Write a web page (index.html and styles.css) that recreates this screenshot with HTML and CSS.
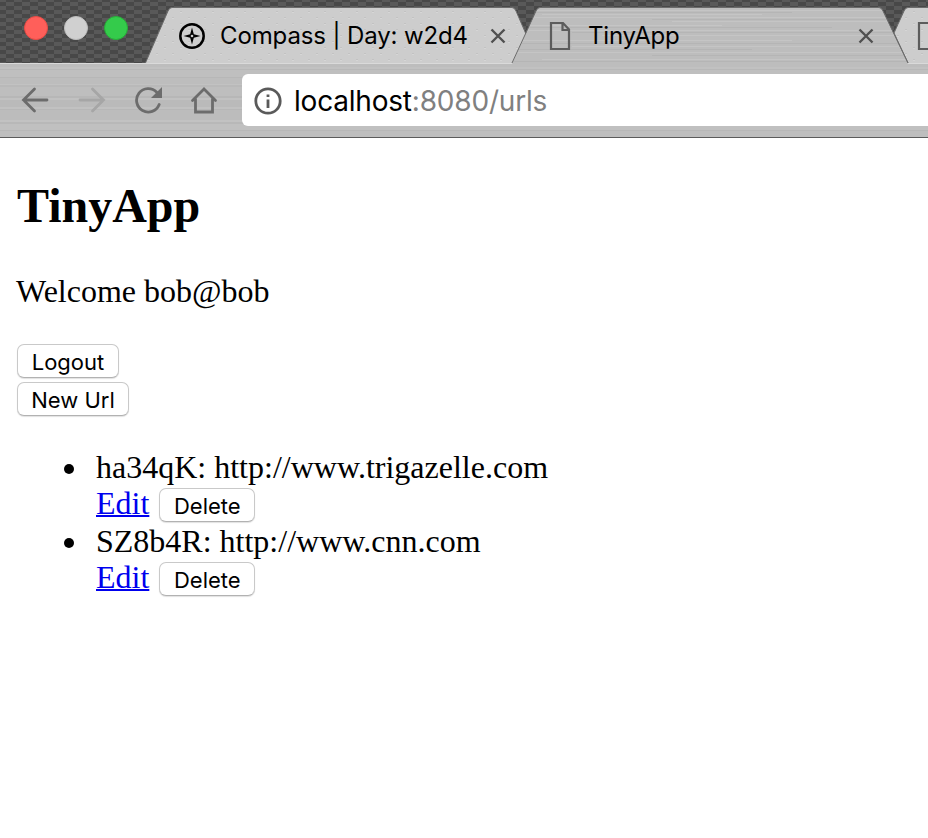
FILE: index.html
```html
<!DOCTYPE html>
<html lang="en">
<head>
<meta charset="utf-8">
<title>TinyApp</title>
<link rel="stylesheet" href="styles.css">
</head>
<body>
<header class="tab-strip">
  <div class="window-controls"><span class="dot close"></span><span class="dot minimize"></span><span class="dot maximize"></span></div>
  <div class="tab first">
    <svg class="tab-shape" width="388" height="56" viewBox="0 0 388 56"><path class="dull" d="M0 56 23 3Q24.500 -.5 27 -.5H367Q369.500 -.5 371 3L394 56Z"/><path class="dots" d="M0 56 23 3Q24.500 -.5 27 -.5H367Q369.500 -.5 371 3L394 56Z"/><path class="edge" d="M0 56 23 3Q24.500 -.5 27 -.5H367Q369.500 -.5 371 3L394 56"/></svg>
    <svg class="compass" width="28" height="28" viewBox="0 0 28 28"><circle cx="14" cy="14" r="11.700"/><path d="M14 5.500 15.800 12.200 22.500 14 15.800 15.800 14 22.500 12.200 15.800 5.500 14 12.200 12.200Z"/><circle class="hub" cx="14" cy="14" r="1.300"/></svg>
    <span class="tab-title compass-title">Compass | Day: w2d4</span>
    <svg class="tab-close" width="16" height="16" viewBox="0 0 16 16"><path d="M1.500 1.500 14.500 14.500M14.500 1.500 1.500 14.500"/></svg>
  </div>
  <div class="tab active">
    <svg class="tab-shape" width="398" height="56" viewBox="0 0 398 56">
      <defs>
        <pattern id="brushed" width="398" height="56" patternUnits="userSpaceOnUse"><rect width="398" height="56" fill="#bdbdbd"/><path d="M0 2.500H398M30 6.500H250M0 9.500H398M160 13.500H390M0 17.500H210M0 22.500H398M90 27.500H398M0 32.500H280M60 38.500H398M0 44.500H398M30 51.500H398" stroke="#c5c5c5"/><path d="M0 4.500H280M140 11.500H398M0 19.500H320M60 24.500H398M0 35.500H398M0 41.500H240M140 47.500H398M0 53.500H398" stroke="#b5b5b5"/></pattern>
        <pattern id="leather" width="16" height="12" patternUnits="userSpaceOnUse"><path d="M3 3.500h2M11 9.500h2" stroke="#c2c2c2"/><path d="M3 4.500h2M11 10.500h2" stroke="#d6d6d6"/></pattern>
      </defs>
      <path fill="url(#brushed)" d="M0 56 24 3Q25.500 -.5 28 -.5H367Q369.500 -.5 371 3L396 56Z"/><path class="edge" d="M0 55 24 3Q25.500 -.5 28 -.5H367Q369.500 -.5 371 3L396 55"/>
    </svg>
    <svg class="document" width="22" height="30" viewBox="0 0 22 30"><path d="M2 2H14L20 8.500V28H2ZM13.500 2V9H20"/></svg>
    <span class="tab-title tiny-title">TinyApp</span>
    <svg class="tab-close" width="16" height="16" viewBox="0 0 16 16"><path d="M1.500 1.500 14.500 14.500M14.500 1.500 1.500 14.500"/></svg>
  </div>
  <div class="tab next">
    <svg class="tab-shape" width="60" height="56" viewBox="0 0 60 56"><path class="dull" d="M0 25 10 3Q11.500 -.5 14 -.5H60V56H14Z"/><path class="dots" d="M0 25 10 3Q11.500 -.5 14 -.5H60V56H14Z"/><path class="edge" d="M14 55 0 25 10 3Q11.500 -.5 14 -.5H60"/></svg>
    <svg class="document" width="22" height="30" viewBox="0 0 22 30"><path d="M2 2H14L20 8.500V28H2ZM13.500 2V9H20"/></svg>
  </div>
</header>
<nav class="toolbar">
  <svg class="nav-icon" width="28" height="28" viewBox="0 0 28 28"><path d="M26 14H2.500M13.500 3 2.500 14 13.500 25"/></svg>
  <svg class="nav-icon disabled" width="28" height="28" viewBox="0 0 28 28"><path d="M2 14H25.500M14.500 3 25.500 14 14.500 25"/></svg>
  <svg class="nav-icon" width="28" height="28" viewBox="0 0 28 28"><path d="M22.700 6.200A11.700 11.700 0 1 0 25.200 18.500"/><path class="solid" d="M28 1V12H17Z"/></svg>
  <svg class="nav-icon home" width="28" height="28" viewBox="0 0 28 28"><path d="M2.500 14.500 14 3 25.500 14.500M5.500 13V26H22.500V13"/></svg>
  <div class="address">
    <svg class="info" width="28" height="28" viewBox="0 0 28 28"><circle cx="14" cy="14" r="12.200"/><path d="M14 12.500V21M14 7.500V10"/></svg>
    <span class="url"><span class="host">localhost</span>:8080/urls</span>
  </div>
</nav>
<main>
  <h2>TinyApp</h2>
  <p>Welcome bob@bob</p>
  <div class="actions"><button class="logout">Logout</button><button class="new-url">New Url</button></div>
  <ul>
    <li><div class="entry">ha34qK: http://www.trigazelle.com</div><div class="entry-actions"><a href="#">Edit</a><button class="delete">Delete</button></div></li>
    <li><div class="entry">SZ8b4R: http://www.cnn.com</div><div class="entry-actions"><a href="#">Edit</a><button class="delete">Delete</button></div></li>
  </ul>
</main>
</body>
</html>
```
FILE: styles.css
```css
* { box-sizing: border-box; }
html, body { margin: 0; height: 100%; overflow: hidden; background: #fff; }
body { color: #000; font: 32px/36px "Liberation Serif", serif; }
svg { display: block; flex: none; fill: none; }

.tab-strip {
  position: relative;
  display: flex;
  height: 64px;
  padding-top: 8px;
  overflow: hidden;
  /* alternating weave columns */
  background: conic-gradient(from 0deg at 50% 50%, #484848 25%, #595959 0 50%, #484848 0 75%, #595959 0) 6px 2px / 16px 8px;
}
.tab-strip::after {
  content: "";
  position: absolute;
  inset: auto 0 0;
  height: 1px;
  background: #dadada;
}
.window-controls { display: flex; flex: none; gap: 16px; width: 145px; padding: 8px 0 0 24px; }
.dot { width: 24px; height: 24px; border: 1px solid; border-radius: 50%; }
.close { background: #ff5f5a; border-color: #e94b45; }
.minimize { background: #d0d0d0; border-color: #bdbdbd; }
.maximize { background: #34cb4b; border-color: #27ad38; }
.tab {
  position: relative;
  display: flex;
  flex: none;
  align-items: center;
  height: 56px;
  padding-bottom: 1px;
  color: #000;
  font: 24px/30px Inter, sans-serif;
}
.tab > * { position: relative; }
.tab > .tab-shape { position: absolute; top: 0; left: 0; overflow: visible; }
.first { width: 367px; padding-left: 33px; }
.active { z-index: 1; width: 382px; padding-left: 37px; }
.next { width: 34px; padding-left: 23px; }
.dull { fill: #cdcdcd; }
.dots { fill: url(#leather); }
.edge { stroke: #6b6b6b; stroke-width: 1; }
.compass { stroke: #000; stroke-width: 2.5; }
.compass path { fill: #000; stroke: none; }
.compass .hub { fill: #ccc; stroke: none; }
.tab-title { white-space: nowrap; letter-spacing: -.12px; }
.compass-title { width: 270px; margin-left: 14px; }
.tiny-title { width: 270px; margin-left: 17px; letter-spacing: -.2px; }
.tab-close { stroke: #505050; stroke-width: 2.4; }
.document { stroke: #5c5c5c; stroke-width: 2.2; }

.toolbar {
  display: flex;
  align-items: flex-start;
  gap: 28px;
  height: 74px;
  padding: 11px 0 0 22px;
  border-bottom: 1px solid #5b5b5b;
  background: linear-gradient(#bdbdbd 0 3px, #c1c1c1 3px 5px, #b8b8b8 5px 6px, #bfbfbf 6px 13px, #b7b7b7 13px 14px, #bdbdbd 14px 20px, #c2c2c2 20px 21px, #b9b9b9 21px 23px, #bebebe 23px 32px, #b7b7b7 32px 34px, #c1c1c1 34px 36px, #bababa 36px 43px, #c1c1c1 43px 45px, #b7b7b7 45px 46px, #bcbcbc 46px 56px, #c2c2c2 56px 58px, #b8b8b8 58px 60px, #c0c0c0 60px 66px, #b7b7b7 66px 67px, #bebebe 67px);
}
.nav-icon { margin-top: 11px; stroke: #6c6c6c; stroke-width: 2.8; stroke-linecap: round; }
.nav-icon:first-child { margin-left: -1px; margin-right: 1px; }
.disabled { stroke: #a6a6a6; }
.nav-icon .solid { fill: #6c6c6c; stroke: none; }
.address {
  display: flex;
  flex: 1;
  align-items: center;
  height: 52px;
  margin: -1px 0 0 -4px;
  padding-left: 12px;
  border-radius: 6px 0 0 6px;
  background: #fff;
}
.info { margin-top: 1px; stroke: #5a5a5a; stroke-width: 2.8; }
.url { margin: 2px 0 0 12px; color: #808080; font: 28px/34px Inter, sans-serif; letter-spacing: -.2px; white-space: nowrap; }
.host { color: #000; }

main { padding: 40px 16px 0; }
h2 { margin: 0 0 0 1px; font-size: 48px; line-height: 56px; }
p { margin: 39px 0 35px; }
.actions { display: flex; flex-direction: column; align-items: flex-start; gap: 4px; padding-left: 1px; }
button {
  height: 34px;
  padding: 2px 0 0;
  border: 1px solid #c9c9c9;
  border-bottom-color: #b2b2b2;
  border-radius: 7px;
  background: #fff;
  box-shadow: 0 1px 1px rgba(0, 0, 0, .12);
  color: #000;
  font: 22px/30px Inter, sans-serif;
  white-space: nowrap;
}
.logout { width: 102px; }
.new-url { width: 112px; }
.delete { width: 96px; }
ul { margin: 33px 0 0; padding: 0 0 0 80px; list-style: none; }
li { position: relative; }
li::before {
  content: "";
  position: absolute;
  top: 15px;
  left: -32px;
  width: 10px;
  height: 10px;
  border-radius: 50%;
  background: #000;
}
.entry { height: 36px; }
.entry-actions { display: flex; align-items: center; gap: 10px; height: 38px; }
.entry-actions a { color: #00e; line-height: 36px; margin-top: -2px; text-decoration-thickness: 2px; }
.entry-actions button { margin-top: 2px; }
```
